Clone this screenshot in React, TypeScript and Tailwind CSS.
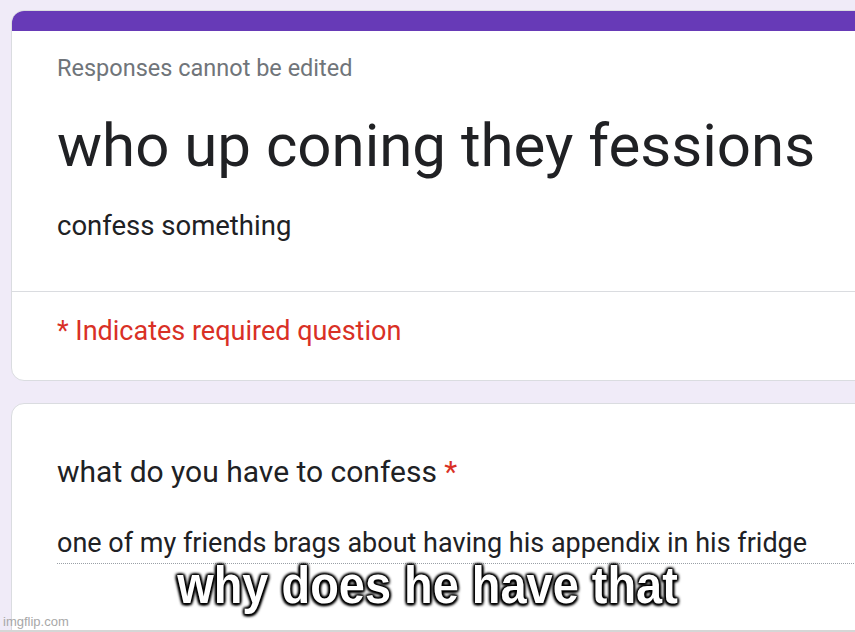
const roboto = 'font-["Roboto","Noto_Sans",sans-serif]'

function HeaderCard() {
  return (
    <div className="ml-[11px] mt-[10px] w-[900px] overflow-hidden rounded-l-[13px] border border-[#dadce0] bg-white">
      <div className="h-[20px] bg-[#673ab7]" />
      <div className="px-[45px] pt-[23px]">
        <p className="text-[23.5px] leading-[28px] text-[#70757a]">Responses cannot be edited</p>
        <h1 className="mt-[32px] text-[60px] leading-[64px] text-[#202124]">who up coning they fessions</h1>
        <p className="mt-[32px] text-[27.5px] leading-[32px] text-[#202124]">confess something</p>
      </div>
      <div className="mt-[49px] border-t border-[#dadce0]" />
      <div className="px-[45px] pt-[23px] pb-[33px]">
        <p className="text-[27px] leading-[32px] text-[#d93025]">* Indicates required question</p>
      </div>
    </div>
  )
}

function QuestionCard() {
  return (
    <div className="ml-[11px] mt-[22px] h-[300px] w-[900px] rounded-l-[13px] border border-[#dadce0] bg-white">
      <div className="pl-[45px] pt-[52px]">
        <p className="text-[30px] leading-[32px] text-[#202124]">
          what do you have to confess <span className="text-[#d93025]">*</span>
        </p>
        <div className="mt-[39px] border-b border-dotted border-[#9aa0a6] pb-[4px]">
          <p className="text-[27px] leading-[32px] text-[#202124]">
            one of my friends brags about having his appendix in his fridge
          </p>
        </div>
      </div>
    </div>
  )
}

export default function App() {
  return (
    <div className={`relative h-[632px] w-[855px] overflow-hidden bg-[#f0ebf8] ${roboto}`}>
      <HeaderCard />
      <QuestionCard />
      <div className="absolute bottom-0 left-0 h-[2px] w-full bg-[#d6d6d6]" />
      {/* meme caption */}
      <div className="absolute left-0 top-[556px] w-full scale-x-92 text-center font-['Liberation_Sans',Arial,sans-serif] text-[51px] leading-[60px] font-bold text-white [text-shadow:0_0_1px_#000,0_0_2px_#000,0_0_3px_#000,0_0_4px_#000,1.5px_1.5px_3px_#000,-1.5px_-1.5px_3px_#000,1.5px_-1.5px_3px_#000,-1.5px_1.5px_3px_#000]">
        why does he have that
      </div>
      <div className="absolute left-[3px] top-[614px] font-['Liberation_Sans',Arial,sans-serif] text-[13px] leading-[16px] text-[#a8a8a8]">
        imgflip.com
      </div>
    </div>
  )
}
